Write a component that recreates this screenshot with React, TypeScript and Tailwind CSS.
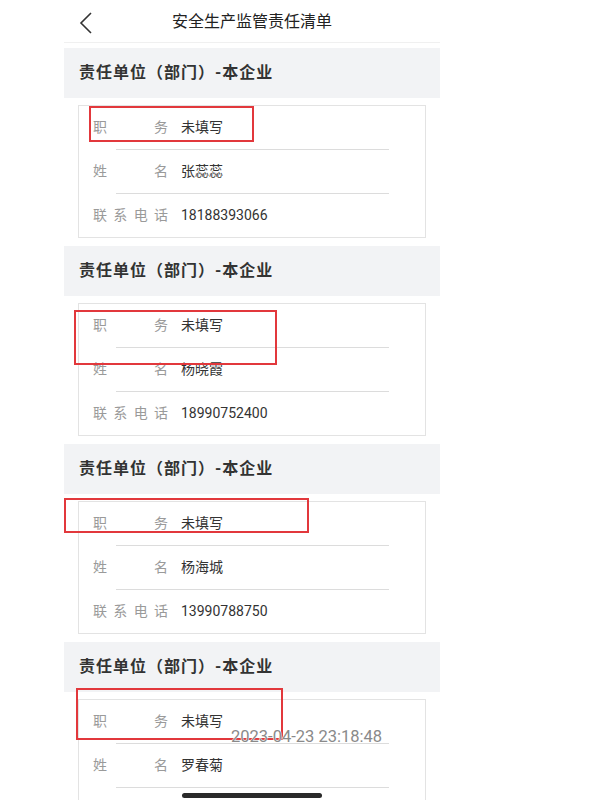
import React from "react";

interface Person {
  position: string;
  name: string;
  phone?: string;
}

const people: Person[] = [
  { position: "未填写", name: "张蕊蕊", phone: "18188393066" },
  { position: "未填写", name: "杨晓霞", phone: "18990752400" },
  { position: "未填写", name: "杨海城", phone: "13990788750" },
  { position: "未填写", name: "罗春菊", phone: "13800000000" },
];

// red annotation boxes drawn over the screenshot
const marks = [
  "left-[89px] top-[106px] w-[165px] h-[36px]",
  "left-[74px] top-[310px] w-[203px] h-[55px]",
  "left-[64px] top-[498px] w-[245px] h-[35px]",
  "left-[76px] top-[688px] w-[207px] h-[52px]",
];

function Label({ chars }: { chars: string[] }) {
  return (
    <div className="flex w-[75px] justify-between text-[14px] text-[#9a9a9a]">
      {chars.map((c, i) => (
        <span key={i}>{c}</span>
      ))}
    </div>
  );
}

function Row({ chars, value }: { chars: string[]; value: string }) {
  return (
    <div className="flex h-[43px] items-center pl-[14px]">
      <Label chars={chars} />
      <span className="ml-[13px] text-[14px] text-[#333333]">{value}</span>
    </div>
  );
}

function Divider() {
  return <div className="ml-[37px] mr-[36px] h-px bg-[#dcdcdc]" />;
}

function Section({ person }: { person: Person }) {
  return (
    <div className="pb-[8px]">
      <div className="flex h-[50px] items-center bg-[#f2f3f5] pl-[15px]">
        <span className="text-[16px] font-bold tracking-[1px] text-[#333333]">
          责任单位（部门）-本企业
        </span>
      </div>
      <div className="mx-[14px] mt-[7px] border border-[#e3e3e3] bg-white">
        <Row chars={["职", "务"]} value={person.position} />
        <Divider />
        <Row chars={["姓", "名"]} value={person.name} />
        <Divider />
        <Row chars={["联", "系", "电", "话"]} value={person.phone ?? ""} />
      </div>
    </div>
  );
}

export default function App() {
  return (
    <div
      className="relative h-[800px] w-[613px] overflow-hidden bg-white"
      style={{ fontFamily: '"Roboto", "Noto Sans CJK SC", sans-serif' }}
    >
      <div className="ml-[64px] w-[376px]">
        <div className="relative flex h-[43px] items-center justify-center border-b border-[#f0f0f0]">
          <svg
            className="absolute left-[15px] top-[12px]"
            width="14"
            height="22"
            viewBox="0 0 14 22"
            fill="none"
          >
            <path d="M12 1 L2 11 L12 21" stroke="#333" strokeWidth="1.6" />
          </svg>
          <span className="mt-[2px] text-[16px] text-[#222222]">安全生产监管责任清单</span>
        </div>
        <div className="mt-[5px]">
          {people.map((p, i) => (
            <Section key={i} person={p} />
          ))}
        </div>
      </div>

      {marks.map((m, i) => (
        <div key={i} className={`absolute border-2 border-[#e2383c] ${m}`} />
      ))}

      <div
        className="absolute left-[231px] top-[725px] text-[16.5px] text-[#8a8a8a]"
        style={{ textShadow: "0 0 1px #fff, 0 0 1px #fff, 0 0 1px #fff" }}
      >
        2023-04-23 23:18:48
      </div>

      <div className="absolute left-[182px] top-[793px] h-[5px] w-[140px] rounded-full bg-[#2a2a2a]" />
    </div>
  );
}
